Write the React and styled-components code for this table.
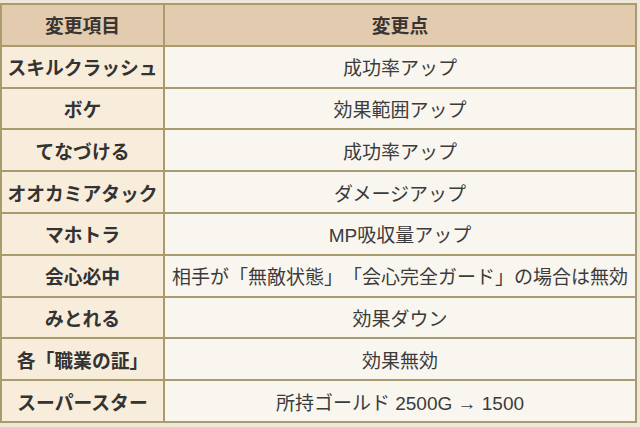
import React from "react";
import styled, { createGlobalStyle } from "styled-components";

const GlobalStyle = createGlobalStyle`
  html, body {
    margin: 0;
    padding: 0;
    background-color: #efe7da;
  }
  body {
    font-family: "Liberation Sans", "Noto Sans CJK JP", sans-serif;
    color: #333;
    text-spacing-trim: space-all;
  }
`;

const Page = styled.div`
  padding: 3px 3px 0 0;
`;

const Table = styled.table`
  width: 637px;
  border-collapse: collapse;
  table-layout: fixed;
  border: 2px solid #a89c6e;
`;

const HeadCell = styled.th`
  height: 39.8px;
  padding: 0;
  background-color: #e2cbae;
  border: 2px solid #a89c6e;
  font-size: 18.8px;
  font-weight: bold;
  color: #3a3530;
  text-align: center;
  width: ${(props) => props.width || "auto"};
`;

const NameCell = styled.td`
  height: 39.8px;
  padding: 0;
  background-color: #f8ecdb;
  border: 2px solid #a89c6e;
  font-size: 18.8px;
  font-weight: bold;
  color: #333;
  text-align: center;
  white-space: nowrap;
`;

const ChangeCell = styled.td`
  height: 39.8px;
  padding: 0 2px;
  background-color: #f9f6f0;
  border: 2px solid #a89c6e;
  font-size: 19px;
  color: #3b3b3b;
  text-align: center;
  white-space: nowrap;
`;

const rows = [
  ["スキルクラッシュ", "成功率アップ"],
  ["ボケ", "効果範囲アップ"],
  ["てなづける", "成功率アップ"],
  ["オオカミアタック", "ダメージアップ"],
  ["マホトラ", "MP吸収量アップ"],
  ["会心必中", "相手が「無敵状態」「会心完全ガード」の場合は無効"],
  ["みとれる", "効果ダウン"],
  ["各「職業の証」", "効果無効"],
  ["スーパースター", "所持ゴールド 2500G → 1500"],
];

const App = () => {
  return (
    <Page>
      <GlobalStyle />
      <Table>
        <thead>
          <tr>
            <HeadCell width="161px">変更項目</HeadCell>
            <HeadCell>変更点</HeadCell>
          </tr>
        </thead>
        <tbody>
          {rows.map(([name, change], index) => (
            <tr key={index}>
              <NameCell>{name}</NameCell>
              <ChangeCell>{change}</ChangeCell>
            </tr>
          ))}
        </tbody>
      </Table>
    </Page>
  );
};

export default App;
